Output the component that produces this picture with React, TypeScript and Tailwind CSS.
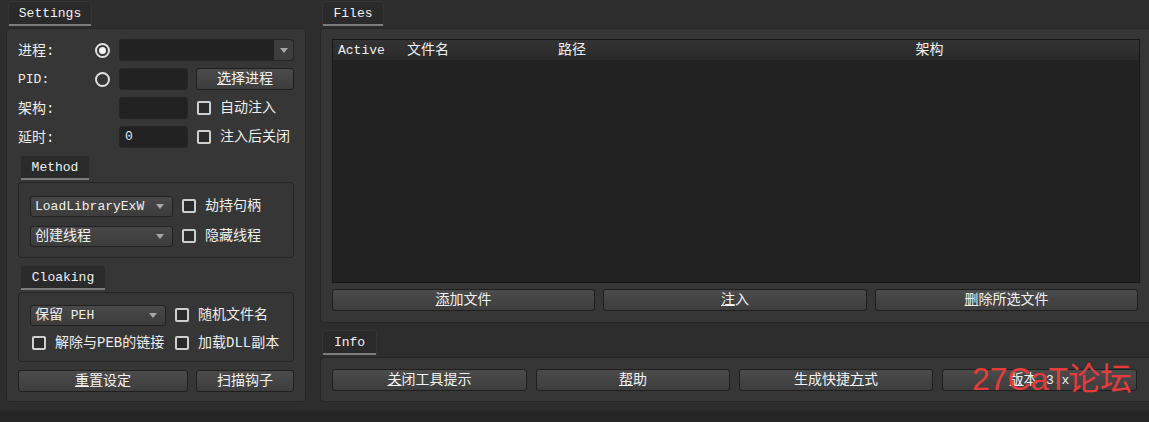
import React from 'react';

const font = { fontFamily: '"Liberation Mono", "Noto Sans CJK SC", monospace' };

function Tab({ label, width }: { label: string; width: string }) {
  return (
    <div className={`${width} h-[25px] flex flex-col rounded-t-[4px] bg-[#2a2a2a] border border-b-0 border-[#353535]`}>
      <div className="flex-1 flex items-center justify-center text-[13px] text-[#f0f0f0] pt-[2px]">{label}</div>
      <div className="h-[2px] bg-[#7c7c7c]" />
    </div>
  );
}

function Box({ className, children }: { className: string; children: React.ReactNode }) {
  return (
    <div className={`bg-[#363636] border border-[#262626] rounded-[4px] ${className}`}>{children}</div>
  );
}

function Btn({ children, className }: { children: React.ReactNode; className: string }) {
  return (
    <div className={`h-[22px] flex items-center justify-center rounded-[3px] border border-[#1f1f1f] bg-gradient-to-b from-[#4b4b4b] to-[#3d3d3d] text-[14px] text-[#f2f2f2] ${className}`}>
      {children}
    </div>
  );
}

function Input({ className, value }: { className: string; value?: string }) {
  return (
    <div className={`h-[22px] rounded-[3px] bg-[#222222] border border-[#262626] flex items-center px-[5px] text-[13px] text-[#e8e8e8] ${className}`}>
      {value}
    </div>
  );
}

function Arrow() {
  return (
    <svg width="8" height="5" viewBox="0 0 8 5">
      <path d="M0 0 L8 0 L4 5 Z" fill="#a8a8a8" />
    </svg>
  );
}

function Combo({ className, text }: { className: string; text: React.ReactNode }) {
  return (
    <div className={`h-[21px] rounded-[3px] border border-[#222] bg-gradient-to-b from-[#484848] to-[#3c3c3c] flex items-center pl-[4px] pr-[8px] ${className}`}>
      <span className="flex-1 text-[13px] text-[#f0f0f0] whitespace-nowrap pt-[1px]">{text}</span>
      <Arrow />
    </div>
  );
}

function Check({ label }: { label: React.ReactNode }) {
  return (
    <div className="flex items-center gap-[9px]">
      <div className="w-[14px] h-[14px] rounded-[2px] border-2 border-[#cfcfcf] bg-[#2a2a2a]" />
      <span className="text-[14px] text-[#eeeeee] whitespace-nowrap pt-[1px]">{label}</span>
    </div>
  );
}

function Radio({ on }: { on?: boolean }) {
  return (
    <div className="w-[15px] h-[15px] rounded-full border-2 border-[#e0e0e0] flex items-center justify-center">
      {on && <div className="w-[7px] h-[7px] rounded-full bg-[#f4f4f4]" />}
    </div>
  );
}

export default function App() {
  return (
    <div className="w-[1149px] h-[422px] overflow-hidden bg-[#2d2d2d] flex flex-col" style={font}>
      <div className="flex gap-[14px] pl-[6px] pt-[1px] h-[402px]">
        {/* Settings */}
        <div className="w-[300px] flex flex-col">
          <div className="pl-[2px]"><Tab label="Settings" width="w-[84px]" /></div>
          <Box className="mt-[2px] flex-1 pl-[11px] pr-[11px] pt-[10px] flex flex-col">
            <div className="flex flex-col gap-[7px]">
              <div className="flex items-center h-[22px]">
                <span className="w-[77px] text-[14px] text-[#eee] pt-[2px]">进程:</span>
                <div className="w-[24px]"><Radio on /></div>
                <div className="w-[175px] h-[22px] rounded-[3px] bg-[#222] border border-[#262626] flex justify-end">
                  <div className="w-[19px] h-full bg-[#3e3e3e] rounded-r-[3px] flex items-center justify-center"><Arrow /></div>
                </div>
              </div>
              <div className="flex items-center h-[22px]">
                <span className="w-[77px] text-[13px] text-[#eee] pt-[2px]">PID:</span>
                <div className="w-[24px]"><Radio /></div>
                <Input className="w-[69px]" />
                <Btn className="ml-[8px] w-[98px]"><span><u>选</u>择进程</span></Btn>
              </div>
              <div className="flex items-center h-[22px]">
                <span className="w-[101px] text-[14px] text-[#eee] pt-[2px]">架构:</span>
                <Input className="w-[69px]" />
                <div className="ml-[9px]"><Check label="自动注入" /></div>
              </div>
              <div className="flex items-center h-[22px]">
                <span className="w-[101px] text-[14px] text-[#eee] pt-[2px]">延时:</span>
                <Input className="w-[69px]" value="0" />
                <div className="ml-[9px]"><Check label="注入后关闭" /></div>
              </div>
            </div>

            <div className="mt-[7px] pl-[2px]"><Tab label="Method" width="w-[70px]" /></div>
            <Box className="mt-[2px] w-[276px] pl-[11px] pt-[12px] pb-[10px] flex flex-col gap-[8px] bg-[#343434]">
              <div className="flex items-center">
                <Combo className="w-[143px]" text="LoadLibraryExW" />
                <div className="ml-[9px]"><Check label="劫持句柄" /></div>
              </div>
              <div className="flex items-center">
                <Combo className="w-[143px]" text={<span className="text-[14px]">创建线程</span>} />
                <div className="ml-[9px]"><Check label="隐藏线程" /></div>
              </div>
            </Box>

            <div className="mt-[7px] pl-[2px]"><Tab label="Cloaking" width="w-[86px]" /></div>
            <Box className="mt-[2px] w-[276px] pl-[11px] pt-[11px] pb-[8px] flex flex-col gap-[6px] bg-[#343434]">
              <div className="flex items-center">
                <Combo className="w-[136px]" text={<span><span className="text-[14px]">保留</span> PEH</span>} />
                <div className="ml-[9px]"><Check label="随机文件名" /></div>
              </div>
              <div className="flex items-center h-[21px] pl-[2px]">
                <div className="w-[143px]"><Check label="解除与PEB的链接" /></div>
                <Check label="加载DLL副本" />
              </div>
            </Box>

            <div className="mt-[8px] flex gap-[8px]">
              <Btn className="w-[170px]"><span><u>重</u>置设定</span></Btn>
              <Btn className="w-[98px]">扫描钩子</Btn>
            </div>
          </Box>
        </div>

        {/* Files + Info */}
        <div className="w-[832px] flex flex-col">
          <div className="pl-[2px]"><Tab label="Files" width="w-[62px]" /></div>
          <Box className="mt-[2px] h-[295px] pl-[11px] pr-[11px] pt-[10px] flex flex-col rounded-r-none border-r-0">
            <div className="w-[808px] h-[244px] bg-[#222] border border-[#161616] flex flex-col">
              <div className="h-[20px] flex items-center bg-gradient-to-b from-[#333] to-[#2a2a2a] text-[#f0f0f0] pt-[1px]">
                <span className="w-[69px] pl-[5px] text-[13px]">Active</span>
                <span className="w-[150px] pl-[5px] text-[14px]">文件名</span>
                <span className="w-[168px] pl-[6px] text-[14px]">路径</span>
                <span className="flex-1 text-center text-[14px]">架构</span>
              </div>
            </div>
            <div className="mt-[6px] flex gap-[8px]">
              <Btn className="w-[263px]"><span><u>添</u>加文件</span></Btn>
              <Btn className="w-[264px]"><span><u>注</u>入</span></Btn>
              <Btn className="w-[263px]"><span><u>删</u>除所选文件</span></Btn>
            </div>
          </Box>

          <div className="mt-[7px] pl-[2px]"><Tab label="Info" width="w-[55px]" /></div>
          <Box className="mt-[2px] flex-1 pl-[11px] pt-[11px] flex gap-[9px] rounded-r-none border-r-0">
            <Btn className="w-[195px]"><span><u>关</u>闭工具提示</span></Btn>
            <Btn className="w-[194px]"><span><u>帮</u>助</span></Btn>
            <Btn className="w-[194px]"><span>生成快捷<u>方</u>式</span></Btn>
            <div className="relative">
              <Btn className="w-[195px]"><span><u>版</u>本 <span className="text-[13px]">3.x</span></span></Btn>
              <span
                className="absolute left-[30px] top-[-6px] text-[32px] leading-none text-[#e63b3b] whitespace-nowrap"
                style={{ fontFamily: '"Liberation Sans", "Noto Sans CJK SC", sans-serif' }}
              >
                27CaT论坛
              </span>
            </div>
          </Box>
        </div>
      </div>
      <div className="h-[8px]" />
      <div className="flex-1 bg-[#262626] border-t border-[#2a2a2a]" />
    </div>
  );
}
